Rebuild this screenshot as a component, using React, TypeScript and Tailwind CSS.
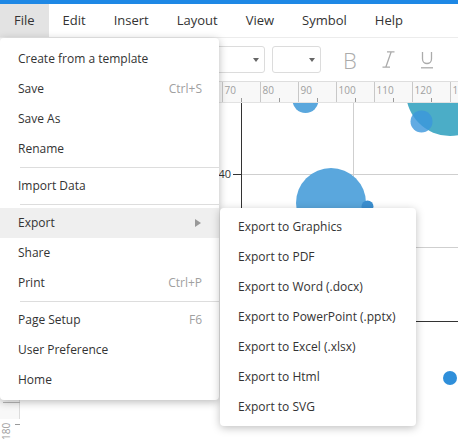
import React from "react";

const font = { fontFamily: '"Open Sans", "Liberation Sans", sans-serif' };

type Item = { label: string; shortcut?: string; arrow?: boolean; active?: boolean } | "sep";

const fileItems: Item[] = [
  { label: "Create from a template" },
  { label: "Save", shortcut: "Ctrl+S" },
  { label: "Save As" },
  { label: "Rename" },
  "sep",
  { label: "Import Data" },
  "sep",
  { label: "Export", arrow: true, active: true },
  { label: "Share" },
  { label: "Print", shortcut: "Ctrl+P" },
  "sep",
  { label: "Page Setup", shortcut: "F6" },
  { label: "User Preference" },
  { label: "Home" },
];

const exportItems = [
  "Export to Graphics",
  "Export to PDF",
  "Export to Word (.docx)",
  "Export to PowerPoint (.pptx)",
  "Export to Excel (.xlsx)",
  "Export to Html",
  "Export to SVG",
];

function Ruler() {
  const majors: number[] = [];
  for (let v = 20; v <= 150; v += 10) majors.push(v);
  const x = (v: number) => 222 + (v - 70) * 3.8;
  return (
    <svg width="438" height="21" className="block">
      <g transform="translate(-20,-82)">
        {majors.map((v) => (
          <g key={v}>
            <line x1={x(v) + 0.5} y1={82} x2={x(v) + 0.5} y2={103} stroke="#c8c8c8" strokeWidth="1" />
            <line x1={x(v + 5) + 0.5} y1={98} x2={x(v + 5) + 0.5} y2={103} stroke="#9a9a9a" strokeWidth="1" />
            <text x={x(v) + 2.5} y={94} fontSize="10" fill="#a0a0a0" fontFamily='"Open Sans", sans-serif'>
              {v}
            </text>
          </g>
        ))}
      </g>
    </svg>
  );
}

function Chart() {
  return (
    <svg width="438" height="338" className="block">
      <g transform="translate(-20,-103)">
        <line x1={353.5} y1={103} x2={353.5} y2={321} stroke="#cfcfcf" strokeWidth="1" />
        <line x1={241} y1={174.5} x2={458} y2={174.5} stroke="#cfcfcf" strokeWidth="1" />
        <line x1={241} y1={247.5} x2={458} y2={247.5} stroke="#cfcfcf" strokeWidth="1" />
        <line x1={241.5} y1={103} x2={241.5} y2={321} stroke="#333" strokeWidth="1" />
        <line x1={241} y1={321.5} x2={458} y2={321.5} stroke="#333" strokeWidth="1" />
        <line x1={233} y1={174.5} x2={241} y2={174.5} stroke="#333" strokeWidth="1" />
        <text x={231} y={178} fontSize="11" fill="#333" textAnchor="end" fontFamily='"Open Sans", sans-serif'>
          40
        </text>
        <circle cx={305.5} cy={100} r={13} fill="#5aa7dd" />
        <circle cx={450} cy={92} r={44} fill="#4badc7" />
        <circle cx={421.5} cy={121.5} r={11} fill="#3b96dc" fillOpacity="0.8" />
        <circle cx={331} cy={203} r={35} fill="#5aa7dd" />
        <circle cx={367.5} cy={206.5} r={6} fill="#3b8fd0" />
        <circle cx={450} cy={378} r={7} fill="#2f8fda" />
      </g>
    </svg>
  );
}

export default function App() {
  return (
    <div className="relative w-[458px] h-[441px] overflow-hidden bg-white text-[#333]" style={font}>
      <div className="h-[4px] bg-[#1e88e5]" />
      <div className="flex h-[34px] items-center border-b border-[#ececec] text-[13px]">
        {["File", "Edit", "Insert", "Layout", "View", "Symbol", "Help"].map((m, i) => (
          <div
            key={m}
            className={`flex h-full items-center px-[14px] pt-[1px] ${i === 0 ? "bg-[#e3e3e3]" : ""}`}
          >
            {m}
          </div>
        ))}
      </div>
      <div className="flex h-[43px] items-center pl-[165px]">
        <div className="flex h-[27px] w-[100px] items-center justify-end rounded-[3px] border border-[#dcdcdc] pr-[5px]">
          <span className="h-0 w-0 border-x-[3px] border-t-[4px] border-x-transparent border-t-[#666]" />
        </div>
        <div className="ml-[7px] flex h-[27px] w-[49px] items-center justify-end rounded-[3px] border border-[#dcdcdc] pr-[5px]">
          <span className="h-0 w-0 border-x-[3px] border-t-[4px] border-x-transparent border-t-[#666]" />
        </div>
        <div className="ml-[22px] text-[22px] leading-none text-[#ababab]" style={{ fontWeight: 300 }}>
          B
        </div>
        <svg width="13" height="17" className="ml-[25px]" viewBox="0 0 13 17">
          <path d="M5 0.8h7.5M0.5 16.2h7.5M9.2 0.8L3.8 16.2" stroke="#ababab" strokeWidth="1.3" fill="none" />
        </svg>
        <svg width="14" height="18" className="ml-[25px]" viewBox="0 0 14 18">
          <path d="M2.5 1v7a4.5 4.5 0 0 0 9 0v-7" stroke="#ababab" strokeWidth="1.3" fill="none" />
          <path d="M1 16.8h12" stroke="#ababab" strokeWidth="1.3" />
        </svg>
      </div>
      <div className="flex h-[338px] border-t border-[#dedede]">
        <div className="w-[20px] shrink-0 border-r border-[#dcdcdc] bg-[#f8f8f8]" />
        <div className="flex flex-1 flex-col">
          <div className="h-[21px] bg-[#f8f8f8] border-b border-[#e2e2e2] overflow-hidden">
            <Ruler />
          </div>
          <div className="flex-1 overflow-hidden">
            <Chart />
          </div>
        </div>
      </div>
      <svg className="absolute left-0 top-[395px]" width="20" height="46">
        <line x1="3" y1="7.5" x2="20" y2="7.5" stroke="#b8b8b8" />
        <line x1="15" y1="29.5" x2="20" y2="29.5" stroke="#9a9a9a" />
        <text
          x="0"
          y="0"
          fontSize="10"
          fill="#a0a0a0"
          fontFamily='"Open Sans", sans-serif'
          transform="translate(10,45) rotate(-90)"
        >
          180
        </text>
      </svg>

      <div className="absolute left-0 top-[38px] w-[219px] rounded-[4px] bg-white pt-[6px] pb-[5px] text-[12px] shadow-[0_2px_8px_rgba(0,0,0,0.28)]">
        {fileItems.map((it, i) =>
          it === "sep" ? (
            <div key={i} className="my-[3px] ml-[20px] h-px bg-[#dddddd]" />
          ) : (
            <div
              key={i}
              className={`flex h-[30px] items-center justify-between pl-[18px] pr-[17px] ${
                it.active ? "bg-[#efefef]" : ""
              }`}
            >
              <span>{it.label}</span>
              {it.shortcut && <span className="text-[#a0a0a0]">{it.shortcut}</span>}
              {it.arrow && (
                <span className="mr-[1px] h-0 w-0 border-y-[4px] border-l-[6px] border-y-transparent border-l-[#999]" />
              )}
            </div>
          )
        )}
      </div>

      <div className="absolute left-[220px] top-[208px] w-[196px] rounded-[4px] bg-white pt-[4px] pb-[4px] text-[12px] shadow-[0_2px_8px_rgba(0,0,0,0.25)]">
        {exportItems.map((e) => (
          <div key={e} className="flex h-[30px] items-center pl-[18px]">
            {e}
          </div>
        ))}
      </div>
    </div>
  );
}
